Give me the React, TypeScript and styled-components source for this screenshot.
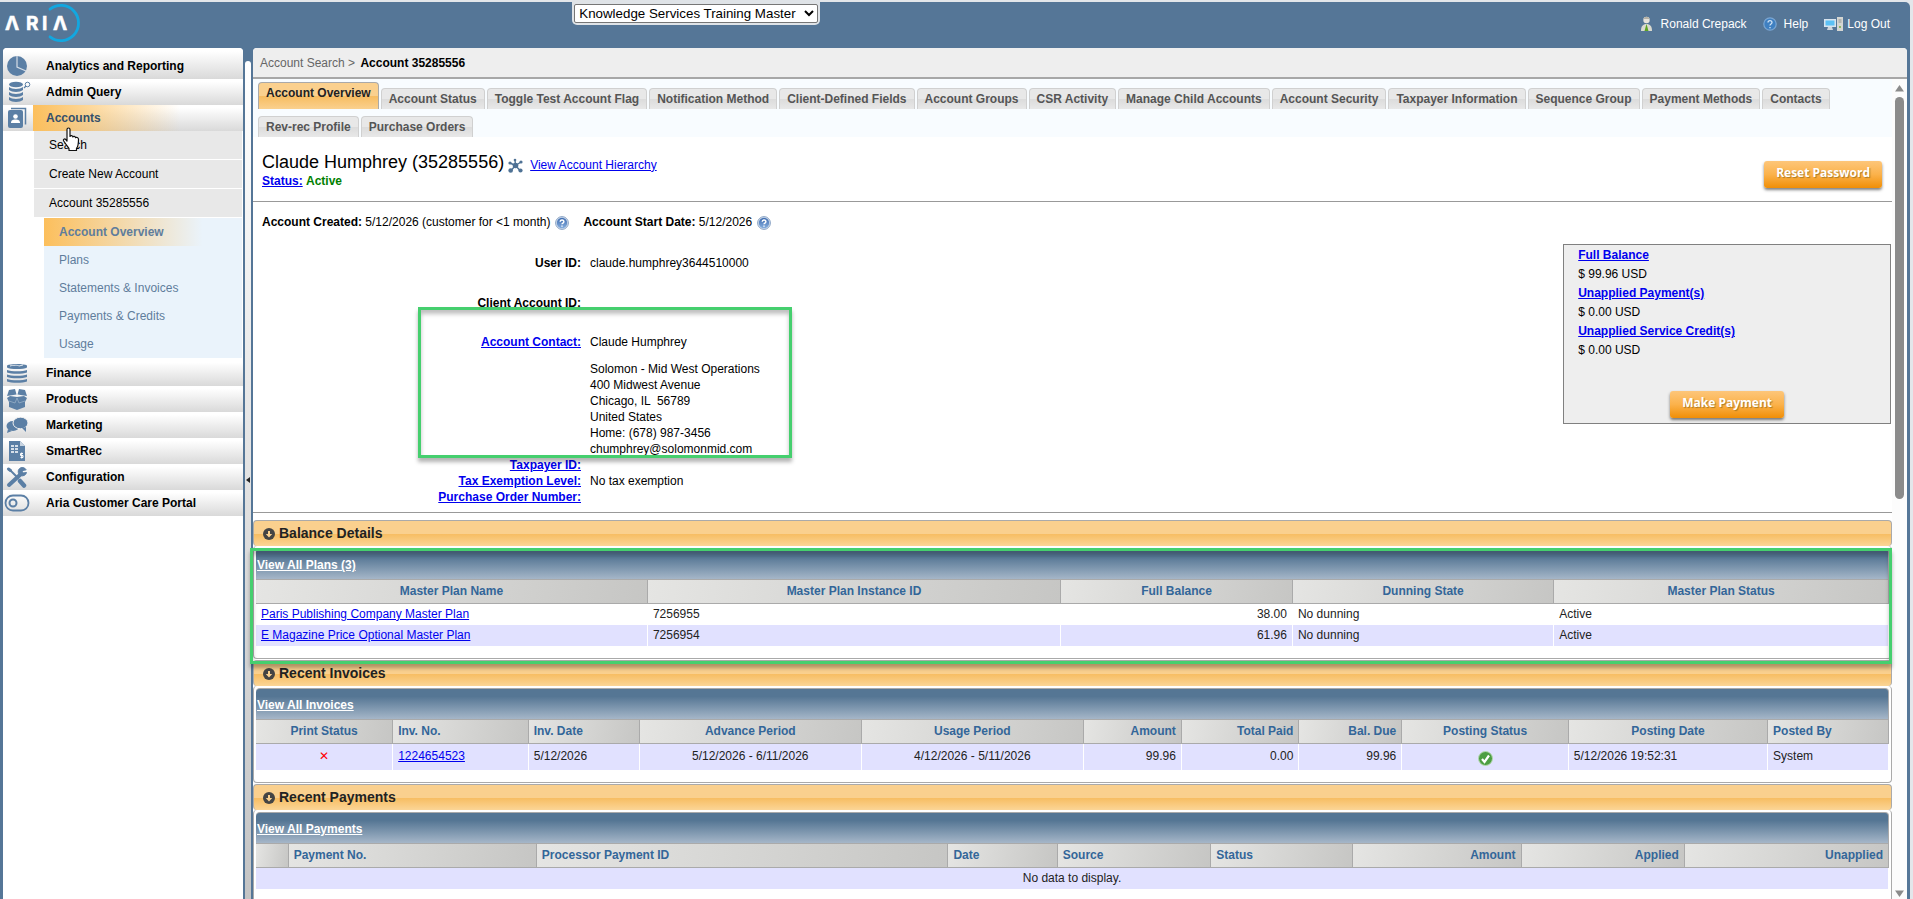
import React from "react";
import styled, { createGlobalStyle, css } from "styled-components";

const GlobalStyle = createGlobalStyle`
  *, *::before, *::after { box-sizing: border-box; }
  html, body, #root { margin: 0; height: 100%; }
  body {
    background: #e3e6ea;
    color: #000;
    font-family: "Liberation Sans", Arial, sans-serif;
    font-size: 12px;
    line-height: 16px;
  }
`;

const BLUE = "#557697";
const ICON = "#5b7fa5";

/* ---------- page frame ---------- */

const Shell = styled.div`
  display: flex;
  flex-direction: column;
  height: 100vh;
  overflow: hidden;
  padding-top: 2px;
  padding-right: 3px;
`;

const Frame = styled.div`
  display: flex;
  flex: 1;
  flex-direction: column;
  min-height: 0;
  padding: 0 3px;
  background: ${BLUE};
  border-top-right-radius: 5px;
`;

const Header = styled.header`
  display: flex;
  flex: none;
  align-items: flex-start;
  height: 46px;
`;

const LogoLink = styled.a`
  flex: 0 0 29.9%;
  svg { display: block; }
`;

const ClientPicker = styled.div`
  margin-top: -2px;
  padding: 4px 2px 2px;
  background: #dfe3e7;
  border-radius: 0 0 5px 5px;
  select {
    display: block;
    height: 19px;
    width: 244px;
    padding: 0;
    background: #fff;
    color: #000;
    border: 1px solid #767676;
    border-radius: 2px;
    font-family: inherit;
  }
`;

const UserLinks = styled.nav`
  display: flex;
  align-items: center;
  margin: 13px 17px 0 auto;
  gap: 16px;
`;

const UserLink = styled.a<{ $gap?: number }>`
  display: flex;
  align-items: center;
  gap: ${(p) => p.$gap ?? 7}px;
  height: 18px;
  color: #fff;
  text-decoration: none;
`;

const Body = styled.div`
  display: flex;
  flex: 1;
  min-height: 0;
`;

/* ---------- sidebar ---------- */

const Sidebar = styled.nav`
  position: relative;
  flex: none;
  width: 240px;
  background: #fff;
  border-radius: 4px 4px 0 0;
`;

const MenuItem = styled.a<{ $first?: boolean; $active?: boolean }>`
  display: flex;
  align-items: center;
  height: ${(p) => (p.$first ? 31 : 26)}px;
  padding-top: ${(p) => (p.$first ? 4 : 0)}px;
  border-radius: ${(p) => (p.$first ? "4px 4px 0 0" : "0")};
  background: linear-gradient(#fff 10%, #d9d9d9);
  color: ${(p) => (p.$active ? "#35506b" : "#000")};
  font-weight: bold;
  text-decoration: none;
`;

const MenuIcon = styled.span`
  display: flex;
  justify-content: center;
  flex: none;
  width: 30px;
  padding-right: 3px;
  svg { display: block; flex: none; }
`;

const MenuLabel = styled.span<{ $active?: boolean }>`
  flex: 1;
  padding: 5px 0 5px 13px;
  ${(p) =>
    p.$active &&
    css`
      background: linear-gradient(90deg, #fcbf5c, rgba(252, 191, 92, 0) 70%);
    `}
`;

const SubMenu = styled.div`
  display: flex;
  flex-direction: column;
  gap: 1px;
  margin: 0 1px 1px 31px;
`;

const SubItem = styled.a`
  height: 28px;
  padding: 6px 15px;
  background: #e8e8e8;
  color: #000;
  text-decoration: none;
`;

const LeafMenu = styled.div`
  display: flex;
  flex-direction: column;
  margin: 0 1px 2px 41px;
  background: #eaf3fb;
`;

const LeafItem = styled.a<{ $active?: boolean }>`
  height: 28px;
  padding: 6px 15px;
  color: #5f7d9c;
  text-decoration: none;
  ${(p) =>
    p.$active &&
    css`
      font-weight: bold;
      background: linear-gradient(90deg, #fcbf5c, rgba(252, 191, 92, 0) 80%);
    `}
`;

const Pointer = styled.svg`
  position: absolute;
  left: 59px;
  top: 79px;
`;

const Splitter = styled.div`
  display: flex;
  flex: none;
  align-items: center;
  justify-content: center;
  width: 6px;
  margin: 13px 2px 0;
  background: linear-gradient(#fff, #fafafa 10%, #c4c4c4);
  border-radius: 3px 3px 0 0;
`;

/* ---------- main ---------- */

const Main = styled.main`
  display: flex;
  flex: 1;
  flex-direction: column;
  min-width: 0;
  background: #fff;
  border-radius: 4px 4px 0 0;
`;

const Breadcrumb = styled.div`
  flex: none;
  height: 31px;
  padding: 7px 7px 6px;
  background: #eee;
  border-bottom: 2px solid #a7a7a7;
  border-radius: 4px 4px 0 0;
  color: #666;
  a { color: inherit; text-decoration: none; }
  strong { margin-left: 2px; color: #000; }
`;

const Scroller = styled.div`
  display: flex;
  flex: 1;
  min-height: 0;
`;

const Content = styled.div`
  flex: 1;
  min-width: 0;
`;

const ScrollTrack = styled.div`
  display: flex;
  flex: none;
  flex-direction: column;
  align-items: center;
  width: 15px;
  padding: 6px 0 2px;
  background: #fcfcfc;
  svg { display: block; flex: none; }
`;

const ScrollThumb = styled.div`
  flex: 0 0 49.5%;
  width: 9px;
  margin: 5px 0 auto;
  background: #8b8b8b;
  border-radius: 5px;
`;

const TabBar = styled.nav`
  display: flex;
  flex-wrap: wrap;
  align-items: flex-end;
  gap: 7px 2px;
  padding: 3px 0 0 5px;
  background: #f8fcff;
`;

const Tab = styled.a<{ $active?: boolean }>`
  height: ${(p) => (p.$active ? 27 : 21)}px;
  padding: 2px 7px 0;
  border: 1px solid ${(p) => (p.$active ? "#a9a9a9" : "#d0d0d0")};
  border-bottom: 0;
  border-radius: 4px 4px 0 0;
  background: ${(p) =>
    p.$active
      ? "linear-gradient(#fad08e 50%, #f7bd62 52%, #fad08e)"
      : "linear-gradient(#e8e8e8 50%, #dcdcdc 52%, #e8e8e8)"};
  color: ${(p) => (p.$active ? "#222" : "#555")};
  font-weight: bold;
  text-decoration: none;
  white-space: nowrap;
`;

const AccountHead = styled.section`
  display: flex;
  justify-content: space-between;
  align-items: flex-start;
  padding: 15px 10px 12px 9px;
  border-bottom: 1px solid #999;
`;

const NameRow = styled.div`
  display: flex;
  align-items: center;
  height: 21px;
  svg { margin: 5px 7px 0 4px; }
  a { margin-top: 4px; }
`;

const Name = styled.h1`
  margin: 0;
  font-size: 18px;
  line-height: 21px;
  font-weight: normal;
`;

const Link = styled.a<{ $bold?: boolean }>`
  color: #0000ee;
  font-weight: ${(p) => (p.$bold ? "bold" : "normal")};
`;

const Active = styled.strong`
  color: #008000;
`;

const ActionButton = styled.button`
  flex: none;
  height: 27px;
  padding: 0 12px 4px;
  border: 0;
  border-radius: 3px;
  background: linear-gradient(#fdc67a, #fbb24b 50%, #f08e06);
  box-shadow: 0 2px 3px rgba(0, 0, 0, 0.5);
  color: #fff;
  font: bold 12px/20px "Open Sans", sans-serif;
  text-shadow: 1px 1px 1px rgba(120, 90, 20, 0.6);
`;

const HeadAction = styled.div`
  display: flex;
  margin-top: 9px;
`;

const DateRow = styled.div`
  display: flex;
  align-items: center;
  height: 18px;
  margin-top: 11px;
  padding-left: 9px;
  svg { margin: 2px 14px 0 5px; }
`;

const Details = styled.section`
  position: relative;
  display: flex;
  justify-content: space-between;
  align-items: flex-start;
  padding-bottom: 7px;
  border-bottom: 1px solid #999;
`;

const Fields = styled.dl`
  display: grid;
  flex: 1;
  grid-template-columns: 328px 1fr;
  column-gap: 9px;
  margin: 24px 0 0;
  dt { text-align: right; font-weight: bold; }
  dd { margin: 0; min-height: 16px; }
`;

const SpacedTerm = styled.dt<{ $height: number }>`
  height: ${(p) => p.$height}px;
`;

const Address = styled.address`
  margin-top: 11px;
  font-style: normal;
`;

const BalanceBox = styled.aside`
  display: flex;
  flex: 0 0 20%;
  flex-direction: column;
  align-items: flex-start;
  margin: 13px 1px 0 0;
  padding: 1px 14px 5px;
  background: #eee;
  border: 1px solid #808080;
  line-height: 19px;
  button { align-self: center; margin-top: 31px; }
`;

const Callout = styled.div`
  position: absolute;
  z-index: 2;
  border: 3px solid #45cf6e;
  box-shadow: 0 4px 4px rgba(0, 0, 0, 0.3), inset 0 4px 4px rgba(0, 0, 0, 0.25);
  pointer-events: none;
`;

const ContactCallout = styled(Callout)`
  left: 165px;
  top: 76px;
  width: 374px;
  height: 151px;
`;

const PlansCallout = styled(Callout)`
  left: -3px;
  right: 0;
  top: 28px;
  bottom: -5px;
`;

/* ---------- sections ---------- */

const Sections = styled.div`
  display: flex;
  flex-direction: column;
  gap: 1px;
  margin-top: 7px;
`;

const Section = styled.section`
  position: relative;
`;

const SectionTitle = styled.h2`
  display: flex;
  align-items: center;
  gap: 4px;
  height: 26px;
  margin: 0;
  padding: 0 0 2px 9px;
  border: 1px solid #aaa;
  border-bottom: 0;
  border-radius: 4px;
  background: linear-gradient(#fad08e 50%, #f7bd62 52%, #fbd596);
  color: #222;
  font-size: 14px;
  svg { margin-top: 2px; }
`;

const Panel = styled.div<{ $tall?: boolean }>`
  padding: 2px 2px ${(p) => (p.$tall ? 40 : 12)}px;
  border: 1px solid #aaa;
  border-top: 0;
  border-radius: 4px;
  background: #fff;
`;

const PanelBar = styled.div`
  height: 31px;
  padding: 8px 1px 0;
  border: 1px solid #aaa;
  border-width: 1px 1px 0 0;
  border-radius: 4px 4px 0 0;
  background: linear-gradient(#557694 25%, #a5b6c8);
  a { color: #fff; font-weight: bold; }
`;

const Table = styled.table`
  width: 100%;
  table-layout: fixed;
  border-collapse: separate;
  border-spacing: 0;
  color: #222;
`;

type Align = "left" | "center" | "right";

const Th = styled.th<{ $align?: Align }>`
  height: 25px;
  padding: 0 5px 2px;
  border: 1px solid #aaa;
  border-left: 0;
  background: linear-gradient(100deg, #e5e5e3, #c6c6c4);
  color: #336699;
  text-align: ${(p) => p.$align ?? "left"};
`;

const Td = styled.td<{ $align?: Align }>`
  padding: 0 5px 2px;
  border-right: 1px solid #fff;
  text-align: ${(p) => p.$align ?? "left"};
  svg { display: block; margin: 4px auto 0; }
`;

const Tr = styled.tr<{ $shaded?: boolean; $tall?: boolean }>`
  height: ${(p) => (p.$tall ? 26 : 21)}px;
  background: ${(p) => (p.$shaded ? "#e1e1ff" : "#fff")};
`;

const Cross = styled.span`
  color: #f00;
  font-family: "DejaVu Sans", sans-serif;
  font-weight: bold;
`;

/* ---------- drawings ---------- */

const Logo = () => (
  <svg width="84" height="44" viewBox="3 2 84 44" role="img" aria-label="Aria">
    <path d="M50 9.2A17.6 17.6 0 1 1 50 36.8" fill="none" stroke="#12a7e0" strokeWidth="2.8" strokeLinecap="round" />
    <g fill="#fff" stroke="#fff" strokeWidth=".5" fontFamily="Inter, sans-serif" fontWeight="700" fontSize="19">
      <text x="5" y="30">Λ</text>
      <text x="26" y="30">R</text>
      <text x="42" y="30">I</text>
      <text x="53" y="30">Λ</text>
    </g>
  </svg>
);

const PersonIcon = () => (
  <svg width="13" height="16" viewBox="0 0 13 16">
    <path d="M1 15c0-5 2-7 5.5-7s5.500 2 5.500 7z" fill="#d9d9cf" />
    <path d="M6.500 8l-2 7h4z" fill="#5da423" />
    <circle cx="6.500" cy="4" r="3.200" fill="#e6e2da" />
    <path d="M3.500 3c1-3 5-3 6 0z" fill="#b5b1a5" />
  </svg>
);

const HelpHeaderIcon = () => (
  <svg width="14" height="14" viewBox="0 0 14 14">
    <circle cx="7" cy="7" r="6.200" fill="#3f80c1" stroke="#7ba6d2" strokeWidth="1.200" />
    <path d="M5 5.600c0-2.600 4-2.600 4 0 0 1.400-2 1.400-2 2.800M7 10v1.300" fill="none" stroke="#cfe2f5" strokeWidth="1.300" />
  </svg>
);

const LogoutIcon = () => (
  <svg width="20" height="14" viewBox="0 0 20 14">
    <rect x="0" y="2" width="12" height="8" fill="#d8e4ee" />
    <rect x="1.500" y="3.500" width="9" height="5" fill="#5cc1f5" />
    <path d="M4 10h4l1 3H3z" fill="#cfd6dc" />
    <rect x="13" y="0" width="6" height="14" fill="#d5d6d2" />
    <path d="M14.500 3h3M14.500 5h3" stroke="#8f9390" />
    <circle cx="16" cy="10" r="1" fill="#6fae3c" />
  </svg>
);

const HelpIcon = () => (
  <svg width="14" height="14" viewBox="0 0 14 14">
    <defs>
      <linearGradient id="helpFill" x1="0" y1="0" x2="0" y2="1">
        <stop offset="0" stopColor="#3f6cb0" />
        <stop offset="1" stopColor="#86aede" />
      </linearGradient>
    </defs>
    <circle cx="7" cy="7" r="6.400" fill="#d3dfee" stroke="#8aa3c4" />
    <circle cx="7" cy="7" r="5.200" fill="url(#helpFill)" />
    <path d="M5.200 5.800c0-2.400 3.700-2.400 3.700 0 0 1.300-1.900 1.300-1.900 2.500M7 9.500v1.300" fill="none" stroke="#fff" strokeWidth="1.400" />
  </svg>
);

const HierarchyIcon = () => (
  <svg width="15" height="15" viewBox="0 0 15 15" fill="#4f7295" stroke="#4f7295">
    <path d="M7.500 7.500L7 2M7.500 7.500L13 4M7.500 7.500L12 12.500M7.500 7.500L3 12.500M7.500 7.500L2 5" strokeWidth="1.400" />
    <g stroke="none">
      <circle cx="7.500" cy="7.500" r="2.800" />
      <circle cx="7" cy="2" r="1.300" />
      <circle cx="13" cy="4" r="1.600" />
      <circle cx="12.500" cy="12.500" r="2.100" />
      <circle cx="2.700" cy="12.500" r="2.300" />
      <circle cx="2" cy="5" r="1.600" />
    </g>
  </svg>
);

const ToggleIcon = () => (
  <svg width="12" height="12" viewBox="0 0 12 12">
    <circle cx="6" cy="6" r="6" fill="#444" />
    <path d="M5 3h2v3h2.200L6 9.500 2.800 6H5z" fill="#fad08e" />
  </svg>
);

const CheckIcon = () => (
  <svg width="15" height="15" viewBox="0 0 15 15">
    <circle cx="7.500" cy="7.500" r="7" fill="#4d9e43" stroke="#b5d8ae" />
    <path d="M4 8l2.500 3L11 4.500" fill="none" stroke="#fff" strokeWidth="2.200" />
  </svg>
);

const icons: Record<string, React.ReactNode> = {
  pie: (
    <svg width="20" height="20" viewBox="0 0 20 20">
      <circle cx="10" cy="10" r="10" fill={ICON} />
      <path d="M10 0v11l9 4" fill="none" stroke="#d5dde6" strokeWidth="1.200" />
    </svg>
  ),
  query: (
    <svg width="28" height="22" viewBox="-4 0 28 22" fill={ICON}>
      <ellipse cx="9" cy="3.500" rx="7" ry="2.800" />
      <path d="M2 6c3 2.500 11 2.500 14 0v3c-3 2.500-11 2.500-14 0zM2 11c3 2.500 11 2.500 14 0v3c-3 2.500-11 2.500-14 0zM2 16c3 2.500 11 2.500 14 0v3c-3 2.500-11 2.500-14 0z" />
      <path d="M17 7l2-2" stroke={ICON} strokeWidth="1.200" />
      <circle cx="20.500" cy="3.500" r="2.300" fill="none" stroke={ICON} />
    </svg>
  ),
  contact: (
    <svg width="20" height="22" viewBox="0 0 20 22">
      <path d="M4 1.500h14.500v16" fill="none" stroke={ICON} strokeWidth="1.500" />
      <rect x="1" y="3" width="15" height="18" rx="2" fill={ICON} />
      <circle cx="8.500" cy="9.500" r="2.300" fill="#fff" />
      <path d="M4 16c0-3 2-3.500 4.500-3.500S13 13 13 16z" fill="#fff" />
    </svg>
  ),
  coins: (
    <svg width="22" height="20" viewBox="0 0 22 20" fill={ICON}>
      <path d="M1 2.500c3-2 17-2 20 0v2c-3 2-17 2-20 0z" />
      <path d="M4 3c3-1 8-1 9 0l4-1" stroke="#e4eaf0" fill="none" />
      <path d="M1 7c4 1.800 16 1.800 20 0v2.500c-4 1.800-16 1.800-20 0zM1 11.500c4 1.800 16 1.800 20 0V14c-4 1.800-16 1.800-20 0zM1 16c4 1.800 16 1.800 20 0v2.500c-4 1.800-16 1.800-20 0z" />
    </svg>
  ),
  box: (
    <svg width="22" height="21" viewBox="0 0 22 21" fill={ICON}>
      <path d="M3 1l6-1 1.500 5.500L1 7zM13 0l6 1 2 6-9.500-1.500z" />
      <path d="M1 9l3-2 7 1 7-1 3 2-2 4v5l-8 3-8-3v-5z" />
      <path d="M3 12l6 2 2-5 2 5 6-2" fill="none" stroke="#9fb4ca" strokeWidth=".7" />
    </svg>
  ),
  chat: (
    <svg width="22" height="16" viewBox="0 0 22 16" fill={ICON}>
      <ellipse cx="7" cy="9" rx="6.500" ry="5" />
      <path d="M2 12l-1 4 5-2z" />
      <ellipse cx="14.500" cy="6" rx="7.500" ry="5.800" stroke="#eee" />
      <path d="M16 11l4 4v-5z" />
    </svg>
  ),
  sheet: (
    <svg width="18" height="21" viewBox="0 0 18 21">
      <path d="M1 0h11l5 5v15H1z" fill={ICON} />
      <path d="M12 0v5h5" fill="#c9d5e2" />
      <path d="M3 5h7M3 8h7M3 11h7" stroke="#fff" strokeWidth="1.600" />
      <path d="M6.500 4v8" stroke={ICON} />
      <path d="M15 12.500h-2.500v2H15v2h-2.500M13.700 11.500v6" fill="none" stroke="#fff" />
    </svg>
  ),
  tools: (
    <svg width="22" height="21" viewBox="0 0 22 21" fill="none" stroke={ICON} strokeLinecap="round">
      <path d="M3 18L15 7" strokeWidth="4" />
      <path d="M20 2.500a4.200 4.200 0 1 0 .5 3L17 6l-1-2z" fill={ICON} strokeWidth="1" />
      <path d="M3 2.500l3 2.500 6 6" strokeWidth="2" />
      <path d="M2.500 2l2 1.500" strokeWidth="3" />
      <path d="M14 14l4 4.500" strokeWidth="4.500" />
    </svg>
  ),
  portal: (
    <svg width="26" height="18" viewBox="0 0 26 18" fill="none" stroke={ICON}>
      <rect x="1.500" y="1.500" width="23" height="15" rx="7.500" strokeWidth="1.800" />
      <circle cx="9" cy="9" r="3.500" strokeWidth="2" />
    </svg>
  ),
};

/* ---------- data ---------- */

const tabs = [
  "Account Overview", "Account Status", "Toggle Test Account Flag", "Notification Method",
  "Client-Defined Fields", "Account Groups", "CSR Activity", "Manage Child Accounts",
  "Account Security", "Taxpayer Information", "Sequence Group", "Payment Methods", "Contacts",
  "Rev-rec Profile", "Purchase Orders",
];

const lowerMenu = [
  ["coins", "Finance"],
  ["box", "Products"],
  ["chat", "Marketing"],
  ["sheet", "SmartRec"],
  ["tools", "Configuration"],
  ["portal", "Aria Customer Care Portal"],
];

interface Column {
  title: string;
  width: string;
  align?: Align;
  cellAlign?: Align;
}

const planColumns: Column[] = [
  { title: "Master Plan Name", width: "24%", align: "center" },
  { title: "Master Plan Instance ID", width: "25.3%", align: "center" },
  { title: "Full Balance", width: "14.2%", align: "center", cellAlign: "right" },
  { title: "Dunning State", width: "16%", align: "center" },
  { title: "Master Plan Status", width: "20.5%", align: "center" },
];

const invoiceColumns: Column[] = [
  { title: "Print Status", width: "8.4%", align: "center", cellAlign: "center" },
  { title: "Inv. No.", width: "8.3%" },
  { title: "Inv. Date", width: "6.8%" },
  { title: "Advance Period", width: "13.6%", align: "center", cellAlign: "center" },
  { title: "Usage Period", width: "13.6%", align: "center", cellAlign: "center" },
  { title: "Amount", width: "6%", align: "right", cellAlign: "right" },
  { title: "Total Paid", width: "7.2%", align: "right", cellAlign: "right" },
  { title: "Bal. Due", width: "6.3%", align: "right", cellAlign: "right" },
  { title: "Posting Status", width: "10.2%", align: "center", cellAlign: "center" },
  { title: "Posting Date", width: "12.2%", align: "center" },
  { title: "Posted By", width: "7.4%" },
];

const paymentColumns: Column[] = [
  { title: "", width: "2%" },
  { title: "Payment No.", width: "15.2%" },
  { title: "Processor Payment ID", width: "25.2%" },
  { title: "Date", width: "6.7%" },
  { title: "Source", width: "9.4%" },
  { title: "Status", width: "8.7%" },
  { title: "Amount", width: "10.3%", align: "right" },
  { title: "Applied", width: "10%", align: "right" },
  { title: "Unapplied", width: "12.5%", align: "right" },
];

const planRows: React.ReactNode[][] = [
  [<Link href="#">Paris Publishing Company Master Plan</Link>, "7256955", "38.00", "No dunning", "Active"],
  [<Link href="#">E Magazine Price Optional Master Plan</Link>, "7256954", "61.96", "No dunning", "Active"],
];

const invoiceRows: React.ReactNode[][] = [
  [
    <Cross>✕</Cross>, <Link href="#">1224654523</Link>, "5/12/2026", "5/12/2026 - 6/11/2026",
    "4/12/2026 - 5/11/2026", "99.96", "0.00", "99.96", <CheckIcon />, "5/12/2026 19:52:31", "System",
  ],
];

/* ---------- composed parts ---------- */

interface DataTableProps {
  columns: Column[];
  rows: React.ReactNode[][];
  tall?: boolean;
}

const DataTable = ({ columns, rows, tall }: DataTableProps) => (
  <Table>
    <colgroup>
      {columns.map((c, i) => (
        <col key={i} width={c.width} />
      ))}
    </colgroup>
    <thead>
      <tr>
        {columns.map((c, i) => (
          <Th key={i} scope="col" $align={c.align}>{c.title}</Th>
        ))}
      </tr>
    </thead>
    <tbody>
      {rows.map((row, r) => (
        <Tr key={r} $shaded={tall || r % 2 === 1} $tall={tall}>
          {row.map((cell, i) => (
            <Td key={i} $align={columns[i].cellAlign}>{cell}</Td>
          ))}
        </Tr>
      ))}
      {rows.length === 0 && (
        <Tr $shaded>
          <Td colSpan={columns.length} $align="center">No data to display.</Td>
        </Tr>
      )}
    </tbody>
  </Table>
);

interface DataSectionProps extends DataTableProps {
  title: string;
  link: string;
  last?: boolean;
  children?: React.ReactNode;
}

const DataSection = ({ title, link, last, children, ...table }: DataSectionProps) => (
  <Section>
    <SectionTitle>
      <ToggleIcon />
      {title}
    </SectionTitle>
    <Panel $tall={last}>
      <PanelBar><a href="#">{link}</a></PanelBar>
      <DataTable {...table} />
    </Panel>
    {children}
  </Section>
);

export default function App() {
  return (
    <Shell>
      <GlobalStyle />
      <Frame>
        <Header>
          <LogoLink href="#"><Logo /></LogoLink>
          <ClientPicker>
            <select aria-label="Client" defaultValue="kstm">
              <option value="kstm">Knowledge Services Training Master</option>
            </select>
          </ClientPicker>
          <UserLinks>
            <UserLink href="#" $gap={8}><PersonIcon />Ronald Crepack</UserLink>
            <UserLink href="#"><HelpHeaderIcon />Help</UserLink>
            <UserLink href="#" $gap={3}><LogoutIcon />Log Out</UserLink>
          </UserLinks>
        </Header>
        <Body>
          <Sidebar>
            <MenuItem href="#" $first><MenuIcon>{icons.pie}</MenuIcon><MenuLabel>Analytics and Reporting</MenuLabel></MenuItem>
            <MenuItem href="#"><MenuIcon>{icons.query}</MenuIcon><MenuLabel>Admin Query</MenuLabel></MenuItem>
            <MenuItem href="#" $active><MenuIcon>{icons.contact}</MenuIcon><MenuLabel $active>Accounts</MenuLabel></MenuItem>
            <SubMenu>
              <SubItem href="#">Search</SubItem>
              <SubItem href="#">Create New Account</SubItem>
              <SubItem href="#">Account 35285556</SubItem>
            </SubMenu>
            <LeafMenu>
              <LeafItem href="#" $active>Account Overview</LeafItem>
              <LeafItem href="#">Plans</LeafItem>
              <LeafItem href="#">Statements &amp; Invoices</LeafItem>
              <LeafItem href="#">Payments &amp; Credits</LeafItem>
              <LeafItem href="#">Usage</LeafItem>
            </LeafMenu>
            {lowerMenu.map(([icon, label]) => (
              <MenuItem key={label} href="#"><MenuIcon>{icons[icon]}</MenuIcon><MenuLabel>{label}</MenuLabel></MenuItem>
            ))}
            <Pointer width="19" height="26" viewBox="0 0 19 26">
              <path
                d="M5 2.500c0-2 3-2 3 0v7c.5-1.500 2.800-1 2.800.5.600-1.200 2.700-.8 2.700.7.800-1 3 0 3 1.500 0 5 0 7-2 9.300v2H7v-2c-1-1.500-3-4-5.300-7.500-1-1.600 1-2.600 2-1.500L5 14z"
                fill="#fff" stroke="#111" strokeWidth="1.200" strokeLinejoin="round"
              />
            </Pointer>
          </Sidebar>
          <Splitter>
            <svg width="4" height="6" viewBox="0 0 4 6"><path d="M4 0v6L0 3z" fill="#222" /></svg>
          </Splitter>
          <Main>
            <Breadcrumb>
              <a href="#">Account Search</a> &gt; <strong>Account 35285556</strong>
            </Breadcrumb>
            <Scroller>
              <Content>
                <TabBar>
                  {tabs.map((t, i) => (
                    <Tab key={t} href="#" $active={i === 0}>{t}</Tab>
                  ))}
                </TabBar>
                <AccountHead>
                  <div>
                    <NameRow>
                      <Name>Claude Humphrey (35285556)</Name>
                      <HierarchyIcon />
                      <Link href="#">View Account Hierarchy</Link>
                    </NameRow>
                    <Link href="#" $bold>Status:</Link> <Active>Active</Active>
                  </div>
                  <HeadAction><ActionButton type="button">Reset Password</ActionButton></HeadAction>
                </AccountHead>
                <DateRow>
                  <span><strong>Account Created:</strong> 5/12/2026 (customer for &lt;1 month)</span>
                  <HelpIcon />
                  <span><strong>Account Start Date:</strong> 5/12/2026</span>
                  <HelpIcon />
                </DateRow>
                <Details>
                  <Fields>
                    <SpacedTerm $height={40}>User ID:</SpacedTerm>
                    <dd>claude.humphrey3644510000</dd>
                    <SpacedTerm $height={39}>Client Account ID:</SpacedTerm>
                    <dd />
                    <dt><Link href="#" $bold>Account Contact:</Link></dt>
                    <dd>
                      Claude Humphrey
                      <Address>
                        Solomon - Mid West Operations<br />
                        400 Midwest Avenue<br />
                        Chicago, IL &nbsp;56789<br />
                        United States<br />
                        Home: (678) 987-3456<br />
                        chumphrey@solomonmid.com
                      </Address>
                    </dd>
                    <dt><Link href="#" $bold>Taxpayer ID:</Link></dt>
                    <dd />
                    <dt><Link href="#" $bold>Tax Exemption Level:</Link></dt>
                    <dd>No tax exemption</dd>
                    <dt><Link href="#" $bold>Purchase Order Number:</Link></dt>
                    <dd />
                  </Fields>
                  <BalanceBox>
                    <Link href="#" $bold>Full Balance</Link>
                    <span>$ 99.96 USD</span>
                    <Link href="#" $bold>Unapplied Payment(s)</Link>
                    <span>$ 0.00 USD</span>
                    <Link href="#" $bold>Unapplied Service Credit(s)</Link>
                    <span>$ 0.00 USD</span>
                    <ActionButton type="button">Make Payment</ActionButton>
                  </BalanceBox>
                  <ContactCallout />
                </Details>
                <Sections>
                  <DataSection title="Balance Details" link="View All Plans (3)" columns={planColumns} rows={planRows}>
                    <PlansCallout />
                  </DataSection>
                  <DataSection title="Recent Invoices" link="View All Invoices" columns={invoiceColumns} rows={invoiceRows} tall />
                  <DataSection title="Recent Payments" link="View All Payments" columns={paymentColumns} rows={[]} last />
                </Sections>
              </Content>
              <ScrollTrack>
                <svg width="9" height="7" viewBox="0 0 9 7"><path d="M4.500 0L9 6.500H0z" fill="#8b8b8b" /></svg>
                <ScrollThumb />
                <svg width="9" height="7" viewBox="0 0 9 7"><path d="M0 .5h9L4.500 7z" fill="#8b8b8b" /></svg>
              </ScrollTrack>
            </Scroller>
          </Main>
        </Body>
      </Frame>
    </Shell>
  );
}
